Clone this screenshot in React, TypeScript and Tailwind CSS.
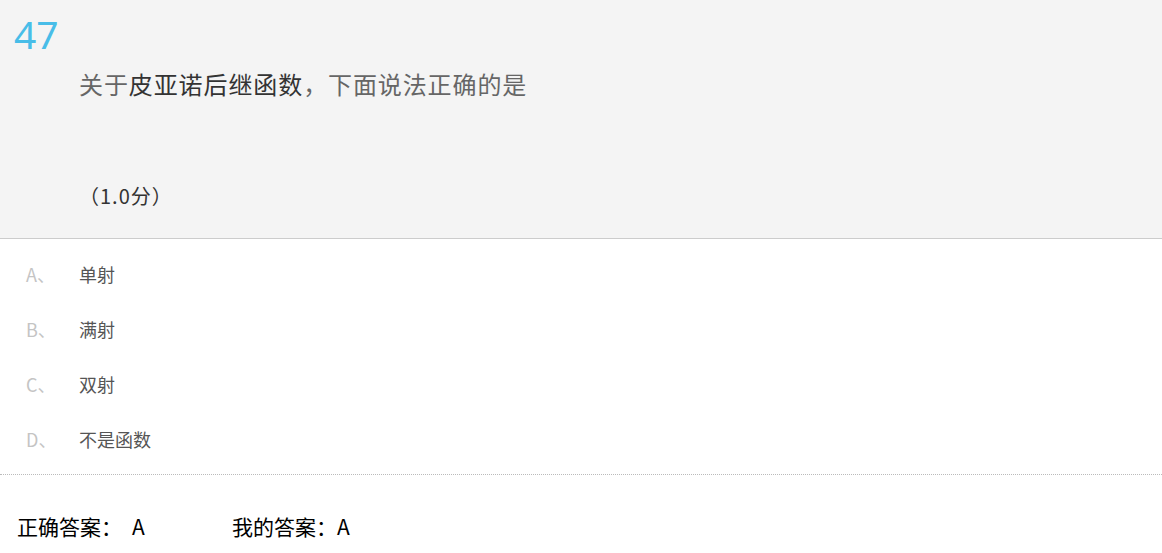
import React from "react";

const cjk = '"Noto Sans CJK SC", "Noto Sans", sans-serif';

export default function App() {
  const options = [
    ["A", "单射"],
    ["B", "满射"],
    ["C", "双射"],
    ["D", "不是函数"],
  ];
  return (
    <div className="w-[1162px] h-[553px] bg-white overflow-hidden" style={{ fontFamily: cjk }}>
      <div className="bg-[#f4f4f4] border-b border-[#cccccc] h-[239px] pt-[10px]">
        <div className="pl-[14px] text-[39px] leading-[48px] text-[#48bde8] font-['Noto_Sans',sans-serif]">47</div>
        <div className="pl-[79px] mt-[10px] text-[24px] leading-[32px] text-[#666666] tracking-[0.9px]">
          关于<span className="text-[#333333]">皮亚诺后继函数</span>，下面说法正确的是
        </div>
        <div className="pl-[79px] mt-[82px] text-[20px] leading-[28px] text-[#333333] tracking-[1px]">（1.0分）</div>
      </div>
      <div className="pt-[8px] pb-[7px] border-b border-dotted border-[#bbbbbb]">
        {options.map(([l, t]) => (
          <div key={l} className="flex items-center h-[55px] text-[18px]">
            <span className="w-[79px] pl-[26px] text-[#c4c4c4]">{l}、</span>
            <span className="text-[#555555]">{t}</span>
          </div>
        ))}
      </div>
      <div className="flex mt-[37px] text-[21px] leading-[28px] text-black">
        <div className="pl-[17px] w-[232px]">正确答案：<span className="ml-[10px]">A</span></div>
        <div>我的答案：A</div>
      </div>
    </div>
  );
}
